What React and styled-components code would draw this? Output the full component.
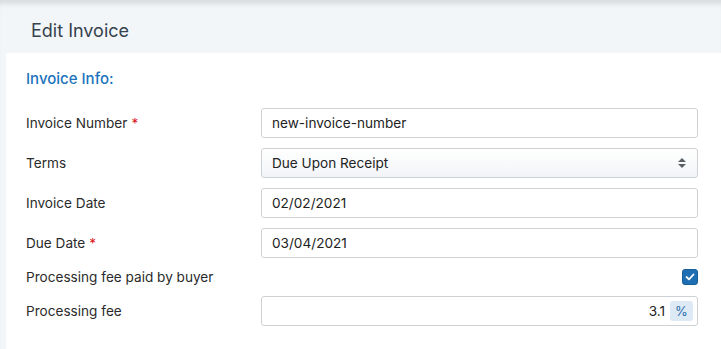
import React from 'react';
import styled, { createGlobalStyle } from 'styled-components';

const Global = createGlobalStyle`
  html, body {
    margin: 0;
    padding: 0;
    background: #f3f6f9;
    font-family: Inter, "Helvetica Neue", "Liberation Sans", Arial, sans-serif;
  }
`;

const Page = styled.div`
  width: 721px;
  height: 349px;
  background: #f3f6f9;
  box-shadow: inset 0 7px 6px -4px rgba(0, 0, 0, 0.13);
  padding-top: 7px;
  box-sizing: border-box;
  overflow: hidden;
`;

const Header = styled.div`
  height: 46px;
  display: flex;
  align-items: center;
  padding-left: 31px;
  font-size: 18px;
  color: #36424d;
`;

const Panel = styled.div`
  margin-left: 6px;
  background: #fff;
  padding: 16px 23px 24px 20px;
  height: 296px;
  box-sizing: border-box;
`;

const SectionTitle = styled.div`
  font-size: 15px;
  line-height: 20px;
  font-weight: 500;
  color: #1b73bd;
  margin-bottom: 19px;
`;

const Rows = styled.div`
  display: flex;
  flex-direction: column;
  gap: 10px;
`;

const Row = styled.div`
  display: grid;
  grid-template-columns: 235px 1fr;
  align-items: center;
  min-height: ${p => (p.$short ? '18px' : '30px')};
`;

const Label = styled.div`
  font-size: 13.6px;
  color: #2b2b2b;
`;

const Required = styled.span`
  color: #e0161b;
  margin-left: 4px;
`;

const Field = styled.div`
  height: 30px;
  box-sizing: border-box;
  border: 1px solid #cfd2d5;
  border-radius: 3px;
  background: ${p => (p.$select ? 'linear-gradient(#ffffff, #f1f4f7)' : '#fff')};
  display: flex;
  align-items: center;
  justify-content: ${p => (p.$right ? 'flex-end' : 'space-between')};
  padding: 0 4px 0 10px;
  font-size: 13.6px;
  color: #222;
`;

const Check = styled.div`
  justify-self: end;
  width: 16px;
  height: 16px;
  border-radius: 3px;
  background: #1d6eb3;
  border: 1px solid #175d98;
  box-sizing: border-box;
  display: flex;
  align-items: center;
  justify-content: center;
`;

const Addon = styled.span`
  width: 23px;
  height: 20px;
  margin-left: 5px;
  border-radius: 3px;
  background: #dde9f4;
  color: #2b6eae;
  font-size: 13px;
  display: flex;
  align-items: center;
  justify-content: center;
`;

const Arrows = () => (
  <svg width="10" height="14" viewBox="0 0 10 14" style={{ marginRight: 6 }}>
    <path d="M5 2 L9 6 H1 Z" fill="#5c6066" />
    <path d="M5 12 L9 8 H1 Z" fill="#5c6066" />
  </svg>
);

export default function App() {
  return (
    <>
      <Global />
      <Page>
        <Header>Edit Invoice</Header>
        <Panel>
          <SectionTitle>Invoice Info:</SectionTitle>
          <Rows>
            <Row>
              <Label>Invoice Number<Required>*</Required></Label>
              <Field>new-invoice-number</Field>
            </Row>
            <Row>
              <Label>Terms</Label>
              <Field $select>Due Upon Receipt<Arrows /></Field>
            </Row>
            <Row>
              <Label>Invoice Date</Label>
              <Field>02/02/2021</Field>
            </Row>
            <Row>
              <Label>Due Date<Required>*</Required></Label>
              <Field>03/04/2021</Field>
            </Row>
            <Row $short>
              <Label>Processing fee paid by buyer</Label>
              <Check>
                <svg width="10" height="8" viewBox="0 0 10 8">
                  <path d="M1.5 4 L4 6.3 L8.5 1.5" stroke="#fff" strokeWidth="1.8" fill="none" strokeLinecap="round" strokeLinejoin="round" />
                </svg>
              </Check>
            </Row>
            <Row>
              <Label>Processing fee</Label>
              <Field $right>3.1<Addon>%</Addon></Field>
            </Row>
          </Rows>
        </Panel>
      </Page>
    </>
  );
}
